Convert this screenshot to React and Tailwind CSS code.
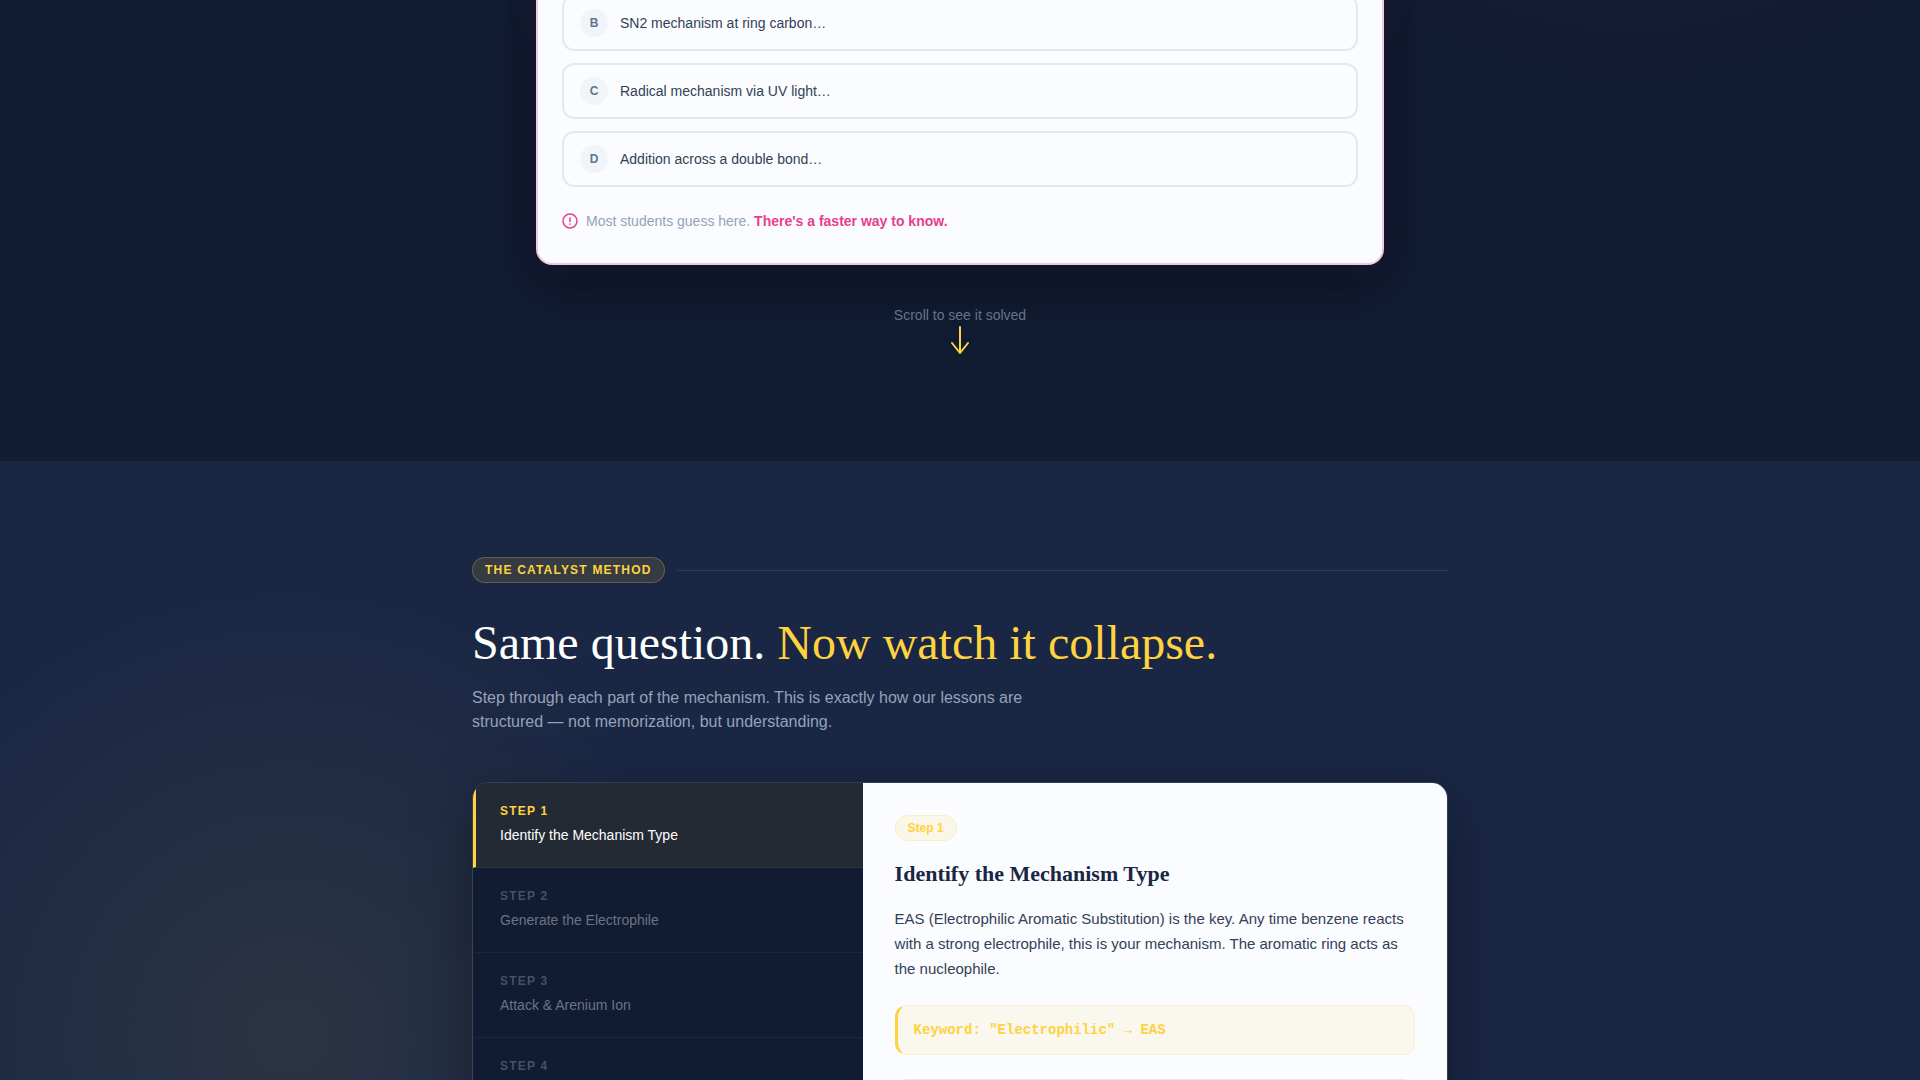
import React, { useState } from 'react';

const options = [
  { letter: 'B', text: 'SN2 mechanism at ring carbon…' },
  { letter: 'C', text: 'Radical mechanism via UV light…' },
  { letter: 'D', text: 'Addition across a double bond…' },
];

const steps = [
  { label: 'Step 1', title: 'Identify the Mechanism Type' },
  { label: 'Step 2', title: 'Generate the Electrophile' },
  { label: 'Step 3', title: 'Attack & Arenium Ion' },
  { label: 'Step 4', title: '' },
];

function QuestionSection() {
  return (
    <section className="overflow-hidden bg-[#111b32] bg-[radial-gradient(circle_450px_at_85%_-360px,rgba(232,62,140,0.09),transparent)] pb-[104px]">
      <div className="-mt-8 mx-auto w-full max-w-4xl px-6">
        <div className="rounded-2xl border-2 border-[#efc9de] bg-[#fafcff] px-6 pt-[25px] pb-8 shadow-[0_20px_60px_rgba(0,0,0,0.3),0_0_40px_rgba(232,62,140,0.06)]">
          <div className="flex flex-col gap-3">
            {options.map((option) => (
              <button key={option.letter} className="flex items-center gap-3 rounded-xl border-2 border-[#e5e8ed] px-4 py-3 text-left">
                <span className="flex h-7 w-7 items-center justify-center rounded-full bg-[#f1f5f9] text-xs font-bold text-[#64748b]">
                  {option.letter}
                </span>
                <span className="text-sm text-[#334155]">{option.text}</span>
              </button>
            ))}
          </div>
          <div className="mt-6 flex items-center gap-2 text-sm text-[#94a3b8]">
            <svg className="h-4 w-4" viewBox="0 0 16 16" fill="none" stroke="#e83e8c" strokeWidth="1.5" strokeLinecap="round">
              <circle cx="8" cy="8" r="7" />
              <path d="M8 5v3.5M8 11v.2" />
            </svg>
            <p>
              Most students guess here. <strong className="font-bold text-[#e83e8c]">There's a faster way to know.</strong>
            </p>
          </div>
        </div>
        <div className="mt-10 flex flex-col items-center text-sm text-[#64748b]">
          <span>Scroll to see it solved</span>
          <svg className="h-8 w-5" viewBox="0 0 20 32" fill="none" stroke="#ffd23f" strokeWidth="2" strokeLinecap="round" strokeLinejoin="round">
            <path d="M10 2v26M2 18l8 10 8-10" />
          </svg>
        </div>
      </div>
    </section>
  );
}

function StepTab({ step, active, onClick }) {
  return (
    <button
      onClick={onClick}
      className={
        active
          ? 'block w-full border-b border-l-3 border-b-white/5 border-l-[#ffd23f] bg-[#ffd23f]/8 px-6 py-5 text-left'
          : 'block w-full border-b border-l-3 border-b-white/5 border-l-transparent px-6 py-5 text-left'
      }
    >
      <span className={active ? 'block text-xs font-bold tracking-widest text-[#ffd23f] uppercase' : 'block text-xs font-bold tracking-widest text-[#465064] uppercase'}>
        {step.label}
      </span>
      <span className={active ? 'mt-1 block text-sm leading-6 text-white' : 'mt-1 block text-sm leading-6 text-[#6b7484]'}>
        {step.title}
      </span>
    </button>
  );
}

function MethodSection() {
  const [current, setCurrent] = useState(0);

  return (
    <section className="bg-[#1a2744] bg-[radial-gradient(circle_450px_at_15%_575px,rgba(255,210,63,0.08),transparent)] pt-24">
      <div className="mx-auto w-full max-w-5xl px-6">
        <div className="flex items-center gap-3">
          <span className="rounded-full border border-[#ffd23f]/25 bg-[#ffd23f]/12 px-3 py-1 text-xs font-bold tracking-widest text-[#ffd23f] uppercase">
            The Catalyst Method
          </span>
          <div className="h-px flex-1 bg-[#ffd23f]/12" />
        </div>
        <h2 className="mt-8 font-['Liberation_Serif',serif] text-5xl leading-[55px] text-white">
          Same question. <span className="text-[#ffd23f]">Now watch it collapse.</span>
        </h2>
        <p className="mt-4 max-w-xl text-base text-[#94a3b8]">
          Step through each part of the mechanism. This is exactly how our lessons are structured — not memorization, but understanding.
        </p>
        <div className="mt-12 grid grid-cols-5 overflow-hidden rounded-2xl border border-white/10 shadow-[0_20px_60px_rgba(0,0,0,0.35)]">
          <div className="col-span-2 bg-[#111b32]">
            {steps.map((step, i) => (
              <StepTab key={step.label} step={step} active={i === current} onClick={() => setCurrent(i)} />
            ))}
          </div>
          <div className="col-span-3 bg-[#fafcff] p-8">
            <span className="inline-block rounded-full border border-[#ffd23f]/20 bg-[#ffd23f]/12 px-3 py-1 text-xs font-bold text-[#ffd23f]">
              {steps[current].label}
            </span>
            <h3 className="mt-[17px] font-['Liberation_Serif',serif] text-[22px] leading-8 font-bold text-[#1a2744]">
              {steps[current].title}
            </h3>
            <p className="mt-4 text-[15px] leading-[25px] text-[#334155]">
              EAS (Electrophilic Aromatic Substitution) is the key. Any time benzene reacts with a strong electrophile, this is your mechanism. The aromatic ring acts as the nucleophile.
            </p>
            <div className="mt-6 rounded-xl border border-l-3 border-[#ffd23f]/20 border-l-[#ffd23f] bg-[#f9f7ee] px-4 py-3.5 font-['Liberation_Mono',monospace] text-sm font-bold text-[#ffd23f]">
              Keyword: "Electrophilic" → EAS
            </div>
            <div className="mt-6 h-16 rounded-xl border border-[#e5e8ed]" />
          </div>
        </div>
      </div>
    </section>
  );
}

export default function App() {
  return (
    <main className="h-screen overflow-hidden bg-[#1a2744] font-['Liberation_Sans',Arial,sans-serif]">
      <QuestionSection />
      <MethodSection />
    </main>
  );
}
